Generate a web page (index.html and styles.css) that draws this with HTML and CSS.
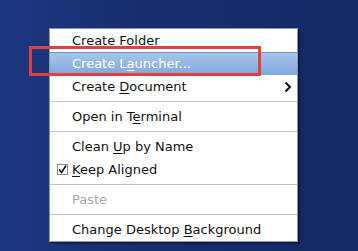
FILE: index.html
```html
<!DOCTYPE html>
<html>
<head>
    <title>Desktop Menu</title>
    <link rel="stylesheet" href="styles.css">
</head>
<body>
    <div class="desktop">
        <div class="menu">
            <div class="item">Create Folder</div>
            <div class="item active">Create L<u>a</u>uncher...</div>
            <div class="item">Create <u>D</u>ocument
                <svg class="arrow" width="8" height="12" viewBox="0 0 8 12">
                    <path d="M1.5 1.5 L6 6 L1.5 10.5" fill="none" stroke="#111" stroke-width="2"/>
                </svg>
            </div>
            <div class="sep"></div>
            <div class="item">Open in T<u>e</u>rminal</div>
            <div class="sep"></div>
            <div class="item">Clean <u>U</u>p by Name</div>
            <div class="item">
                <span class="check">
                    <svg width="11" height="11" viewBox="0 0 11 11">
                        <path d="M2 5.5 L4.5 8.5 L9 1.5" fill="none" stroke="#111" stroke-width="1.6"/>
                    </svg>
                </span>
                <u>K</u>eep Aligned
            </div>
            <div class="sep"></div>
            <div class="item disabled">Paste</div>
            <div class="sep"></div>
            <div class="item">Change Desktop <u>B</u>ackground</div>
        </div>

        <!-- annotation box over the launcher row -->
        <div class="mark"></div>
    </div>
</body>
</html>
```

FILE: styles.css
```css
body {
    margin: 0;
    font-family: 'DejaVu Sans', sans-serif;
    font-size: 13px;
    color: #111;
}

.desktop {
    position: relative;
    width: 358px;
    height: 251px;
    background: linear-gradient(90deg, #1d3780 0%, #172d6e 40%, #132965 100%);
    padding: 28px 0 0 49px;
    box-sizing: border-box;
    overflow: hidden;
}

.menu {
    width: 249px;
    box-sizing: border-box;
    background: #fff;
    border: 1px solid #8f96a8;
    box-shadow: 2px 2px 0 rgba(0, 0, 0, 0.35);
}

.item {
    position: relative;
    height: 23px;
    line-height: 23px;
    padding-left: 22px;
    white-space: nowrap;
}

.item u {
    text-decoration-thickness: 1px;
    text-underline-offset: 2px;
}

.item.active {
    color: #fff;
    background: linear-gradient(#a9c7ec, #7fa8de);
    box-shadow: inset 0 1px 0 #6f91c4;
}

.item.disabled {
    color: #a7a7a7;
}

.arrow {
    position: absolute;
    right: 5px;
    top: 6px;
}

.check {
    position: absolute;
    left: 7px;
    top: 6px;
    width: 11px;
    height: 11px;
    box-sizing: border-box;
    border: 1px solid #8a8a8a;
    background: #fff;
    display: flex;
}

.check svg {
    margin: -1px;
}

.sep {
    height: 7px;
    display: flex;
    align-items: center;
}

.sep::after {
    content: "";
    flex: 1;
    height: 1px;
    background: #c4c4c4;
}

.mark {
    position: absolute;
    left: 29px;
    top: 46px;
    width: 232px;
    height: 30px;
    box-sizing: border-box;
    border: 3px solid #e2403f;
}
```
